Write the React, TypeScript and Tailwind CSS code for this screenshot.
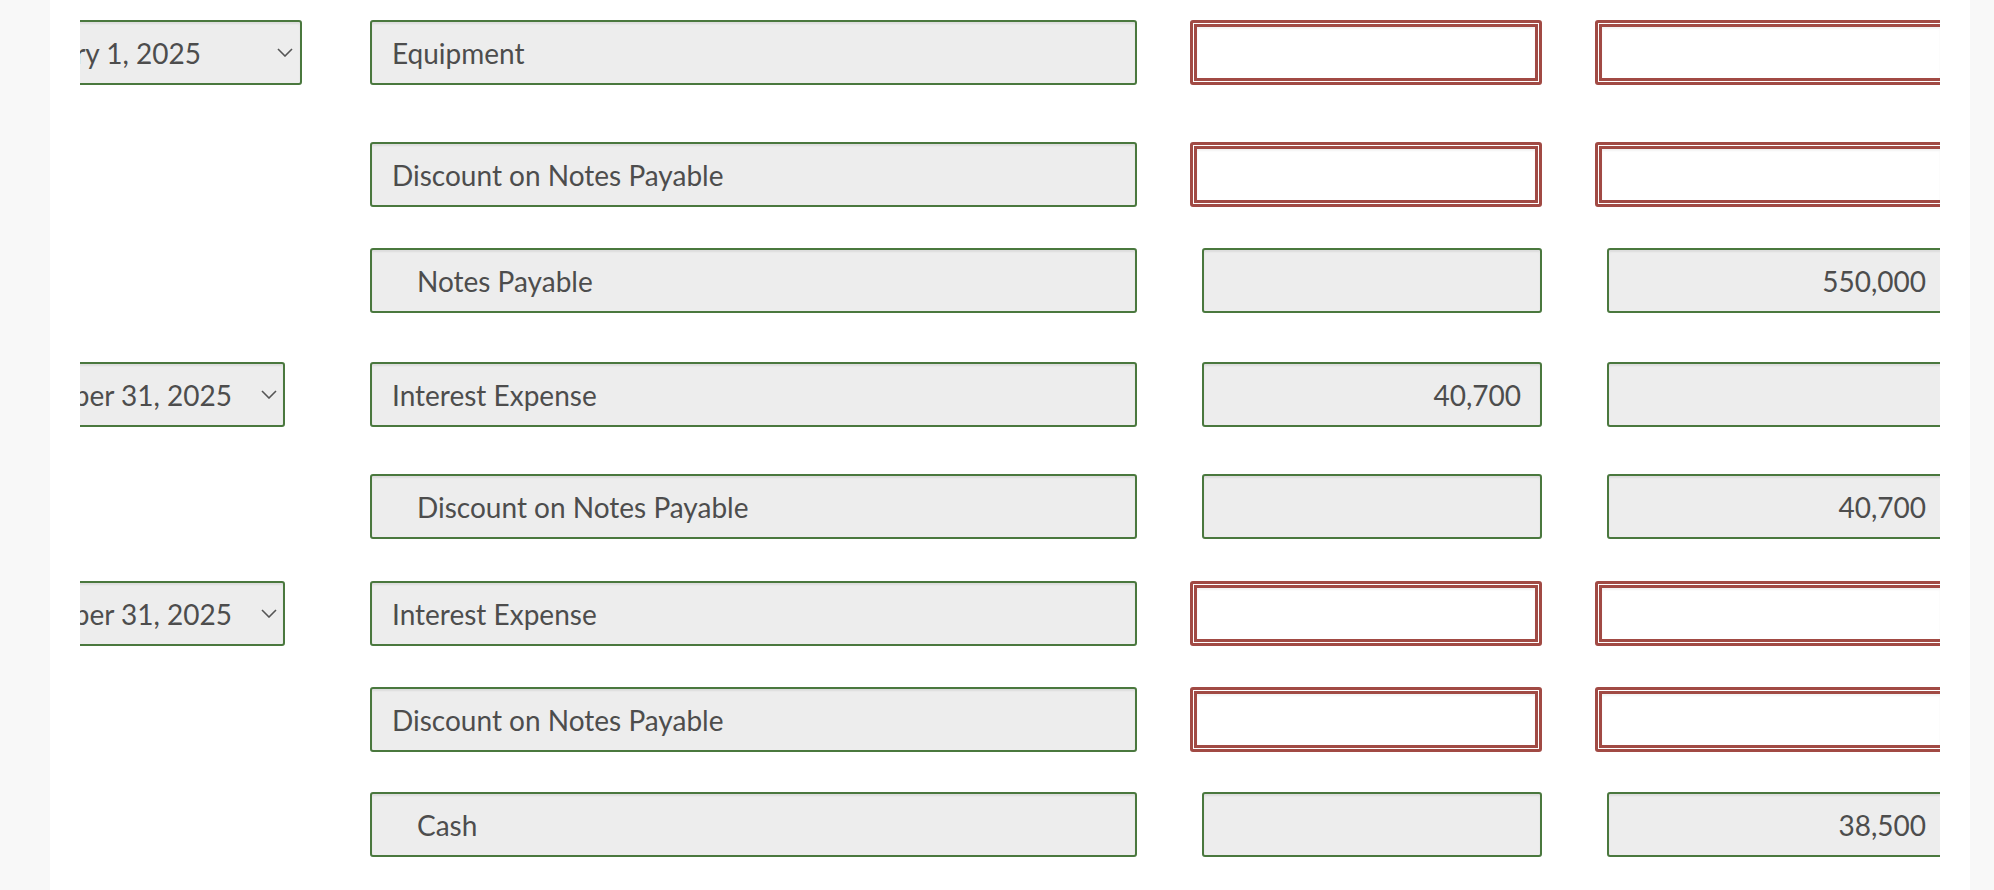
import React from "react";

const font = "font-['Lato','Liberation_Sans',sans-serif]";

function Chevron() {
  return (
    <svg width="16" height="9" viewBox="0 0 16 9" className="shrink-0">
      <polyline points="1,1 8,8 15,1" fill="none" stroke="#555" strokeWidth="1.6" />
    </svg>
  );
}

function DateSelect({ text, wide }: { text: string; wide: boolean }) {
  return (
    <div
      className={
        wide
          ? "ml-[-40px] w-[262px] h-full shrink-0 flex items-center justify-end border-2 border-[#4a783e] rounded-[3px] bg-[#ededed] shadow-[inset_0_2px_2px_rgba(0,0,0,0.07)] pr-[7px]"
          : "ml-[-40px] w-[245px] h-full shrink-0 flex items-center justify-end border-2 border-[#4a783e] rounded-[3px] bg-[#ededed] shadow-[inset_0_2px_2px_rgba(0,0,0,0.07)] pr-[6px]"
      }
    >
      <span className="whitespace-nowrap shrink-0">{text}</span>
      <span className={wide ? "ml-[76px] flex" : "ml-[29px] flex"}>
        <Chevron />
      </span>
    </div>
  );
}

function Account({ text, indent }: { text: string; indent: boolean }) {
  return (
    <div
      className={
        indent
          ? "w-[767px] h-full shrink-0 flex items-center border-2 border-[#4a783e] rounded-[3px] bg-[#ededed] shadow-[inset_0_2px_2px_rgba(0,0,0,0.07)] pl-[45px]"
          : "w-[767px] h-full shrink-0 flex items-center border-2 border-[#4a783e] rounded-[3px] bg-[#ededed] shadow-[inset_0_2px_2px_rgba(0,0,0,0.07)] pl-[20px]"
      }
    >
      <span className="whitespace-nowrap">{text}</span>
    </div>
  );
}

function Amount({ value, error }: { value?: string; error: boolean }) {
  if (error) {
    return (
      <div className="ml-[53px] w-[352px] h-full shrink-0 border-[3px] border-[#a14a44] rounded-[3px] bg-white p-px">
        <div className="w-full h-full border-[3px] border-[#a14a44] bg-white shadow-[inset_0_2px_2px_rgba(0,0,0,0.05)]" />
      </div>
    );
  }
  return (
    <div className="ml-[53px] w-[352px] h-full shrink-0 flex">
      <div className="ml-[12px] w-[340px] h-full flex items-center justify-end border-2 border-[#4a783e] rounded-[3px] bg-[#ededed] shadow-[inset_0_2px_2px_rgba(0,0,0,0.07)] pr-[19px]">
        <span className="whitespace-nowrap">{value ?? ""}</span>
      </div>
    </div>
  );
}

type Row = {
  mt: string;
  date?: { text: string; wide: boolean };
  account: string;
  indent: boolean;
  debit?: string;
  credit?: string;
  error: boolean;
};

const rows: Row[] = [
  { mt: "mt-0", date: { text: "January 1, 2025", wide: true }, account: "Equipment", indent: false, error: true },
  { mt: "mt-[57px]", account: "Discount on Notes Payable", indent: false, error: true },
  { mt: "mt-[41px]", account: "Notes Payable", indent: true, credit: "550,000", error: false },
  { mt: "mt-[49px]", date: { text: "December 31, 2025", wide: false }, account: "Interest Expense", indent: false, debit: "40,700", error: false },
  { mt: "mt-[47px]", account: "Discount on Notes Payable", indent: true, credit: "40,700", error: false },
  { mt: "mt-[42px]", date: { text: "December 31, 2025", wide: false }, account: "Interest Expense", indent: false, error: true },
  { mt: "mt-[41px]", account: "Discount on Notes Payable", indent: false, error: true },
  { mt: "mt-[40px]", account: "Cash", indent: true, credit: "38,500", error: false },
];

export default function App() {
  return (
    <div className={`w-[1994px] h-[890px] flex bg-[#f8f8f8] ${font} text-[28px] text-[#4d4d4d]`}>
      <div className="w-[50px] shrink-0" />
      <div className="w-[1920px] shrink-0 bg-white px-[30px] pt-[20px]">
        <div className="w-[1860px] overflow-hidden flex flex-col">
          {rows.map((r, i) => (
            <div key={i} className={`${r.mt} h-[65px] flex shrink-0`}>
              <div className="w-[290px] h-full shrink-0 flex">
                {r.date ? <DateSelect text={r.date.text} wide={r.date.wide} /> : null}
              </div>
              <Account text={r.account} indent={r.indent} />
              <Amount value={r.debit} error={r.error} />
              <Amount value={r.credit} error={r.error} />
            </div>
          ))}
        </div>
      </div>
      <div className="flex-1" />
    </div>
  );
}
